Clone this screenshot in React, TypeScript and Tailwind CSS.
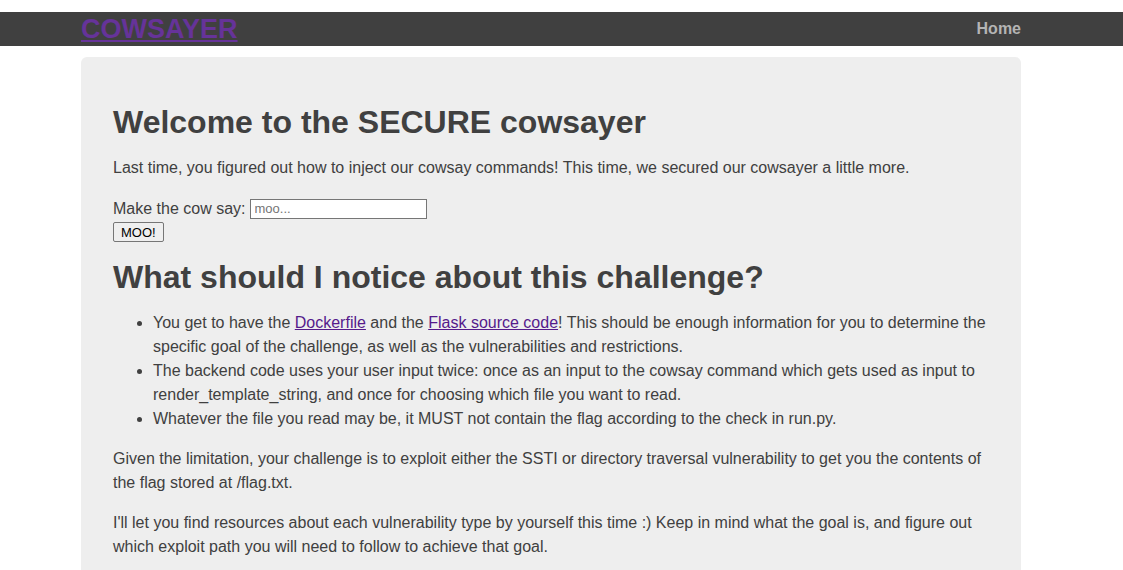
export default function App() {
  return (
    <div className="min-h-screen bg-white pt-3 text-[#404040]" style={{ fontFamily: "'Liberation Sans', Arial, sans-serif" }}>
      {/* Navbar */}
      <nav className="h-[34px] bg-[#404040]">
        <div className="ml-[81px] flex h-full w-[940px] items-center justify-between">
          <a href="#" className="text-[27px] font-bold leading-none text-[#663399] underline">
            COWSAYER
          </a>
          <a href="#" className="text-base font-bold text-[#b4b4b4]">
            Home
          </a>
        </div>
      </nav>

      {/* Main card */}
      <main className="ml-[81px] mt-[11px] w-[940px] rounded-t-md bg-[#eeeeee] px-8 pt-[46px] pb-6 text-base leading-6">
        <h1 className="text-[32px] font-bold leading-[38px]">Welcome to the SECURE cowsayer</h1>
        <p className="mt-[15px]">
          Last time, you figured out how to inject our cowsay commands! This time, we secured our cowsayer a
          little more.
        </p>

        <form className="mt-[17px]" onSubmit={(e) => e.preventDefault()}>
          <label className="flex items-center gap-1">
            Make the cow say:
            <input
              type="text"
              placeholder="moo..."
              className="h-5 w-[177px] border border-[#767676] bg-white px-1 text-[13px] placeholder:text-[#757575]"
            />
          </label>
          <button
            type="submit"
            className="mt-[1px] block h-[20px] rounded-[2px] border border-[#767676] bg-[#efefef] px-[7px] text-[13px] leading-none text-black"
          >
            MOO!
          </button>
        </form>

        <h2 className="mt-4 text-[32px] font-bold leading-[38px]">What should I notice about this challenge?</h2>
        <ul className="mt-[15px] list-disc pl-10">
          <li>
            You get to have the{" "}
            <a href="#" className="text-[#551a8b] underline">
              Dockerfile
            </a>{" "}
            and the{" "}
            <a href="#" className="text-[#551a8b] underline">
              Flask source code
            </a>
            ! This should be enough information for you to determine the specific goal of the challenge, as well as
            the vulnerabilities and restrictions.
          </li>
          <li>
            The backend code uses your user input twice: once as an input to the cowsay command which gets used as
            input to render_template_string, and once for choosing which file you want to read.
          </li>
          <li>Whatever the file you read may be, it MUST not contain the flag according to the check in run.py.</li>
        </ul>

        <p className="mt-4">
          Given the limitation, your challenge is to exploit either the SSTI or directory traversal vulnerability to
          get you the contents of the flag stored at /flag.txt.
        </p>
        <p className="mt-4">
          I'll let you find resources about each vulnerability type by yourself this time :) Keep in mind what the
          goal is, and figure out which exploit path you will need to follow to achieve that goal.
        </p>
      </main>
    </div>
  );
}
